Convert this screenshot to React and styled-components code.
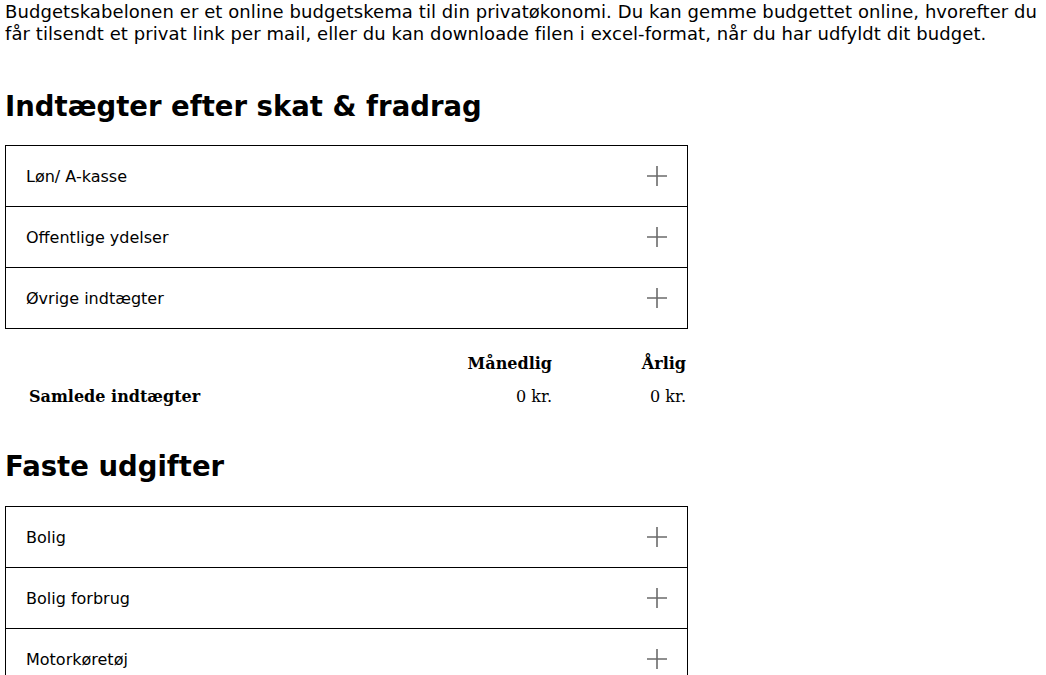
import React from 'react';
import styled, { createGlobalStyle } from 'styled-components';

const GlobalStyle = createGlobalStyle`
  body {
    margin: 0;
    background: #fff;
    color: #000;
    font-family: "DejaVu Sans", "Noto Sans", sans-serif;
  }
`;

const Page = styled.div`
  padding: 0 5px;
`;

const Intro = styled.p`
  margin: 1px 0 0;
  font-size: 18px;
  line-height: 22px;
  letter-spacing: 0.08px;
  font-weight: 400;
  white-space: nowrap;
`;

const SectionTitle = styled.h2`
  margin: ${({ $first }) => ($first ? '43px 0 21px' : '40px 0 22px')};
  font-size: 27.5px;
  line-height: 36px;
  font-weight: 700;
`;

const Accordion = styled.div`
  width: 683px;
  box-sizing: border-box;
  border: 1px solid #000;
`;

const Row = styled.div`
  display: flex;
  align-items: center;
  justify-content: space-between;
  height: 60px;
  padding: 0 20px;
  font-size: 16px;
  border-top: ${({ $first }) => ($first ? 'none' : '1px solid #000')};
`;

const Plus = () => (
  <svg width="20" height="20" viewBox="0 0 20 20">
    <path d="M10 0v20M0 10h20" stroke="#6b6b6b" strokeWidth="1.6" />
  </svg>
);

const Summary = styled.div`
  width: 681px;
  display: grid;
  grid-template-columns: 1fr 130px 134px;
  row-gap: 11px;
  margin-top: 24px;
  font-family: "DejaVu Serif", "Liberation Serif", serif;
  font-size: 16px;
  line-height: 22px;
`;

const Cell = styled.div`
  text-align: ${({ $label }) => ($label ? 'left' : 'right')};
  padding-left: ${({ $label }) => ($label ? '24px' : '0')};
  font-weight: ${({ $bold }) => ($bold ? 700 : 400)};
`;

const incomeRows = ['Løn/ A-kasse', 'Offentlige ydelser', 'Øvrige indtægter'];
const fixedRows = ['Bolig', 'Bolig forbrug', 'Motorkøretøj'];

function AccordionList({ items }) {
  return (
    <Accordion>
      {items.map((item, i) => (
        <Row key={item} $first={i === 0}>
          <span>{item}</span>
          <Plus />
        </Row>
      ))}
    </Accordion>
  );
}

export default function App() {
  return (
    <Page>
      <GlobalStyle />
      <Intro>
        Budgetskabelonen er et online budgetskema til din privatøkonomi. Du kan gemme budgettet online, hvorefter du
        <br />
        får tilsendt et privat link per mail, eller du kan downloade filen i excel-format, når du har udfyldt dit budget.
      </Intro>

      <SectionTitle $first>Indtægter efter skat &amp; fradrag</SectionTitle>
      <AccordionList items={incomeRows} />

      <Summary>
        <Cell $label />
        <Cell $bold>Månedlig</Cell>
        <Cell $bold>Årlig</Cell>
        <Cell $label $bold>Samlede indtægter</Cell>
        <Cell>0 kr.</Cell>
        <Cell>0 kr.</Cell>
      </Summary>

      <SectionTitle>Faste udgifter</SectionTitle>
      <AccordionList items={fixedRows} />
    </Page>
  );
}
